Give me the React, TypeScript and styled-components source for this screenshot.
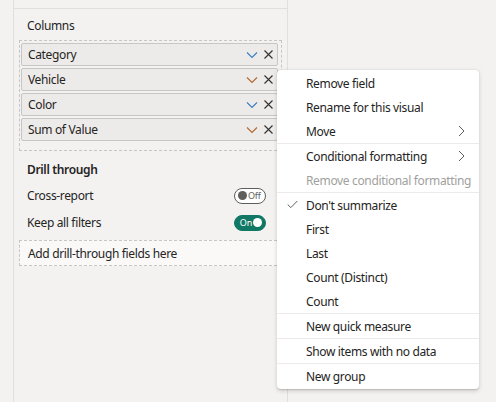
import React from "react";
import styled, { createGlobalStyle } from "styled-components";

const Global = createGlobalStyle`
  html, body { margin: 0; padding: 0; background: #f3f2f1; }
  body { font-family: "Segoe UI", "Noto Sans", "Open Sans", sans-serif; color: #252423; letter-spacing: -0.35px; }
  * { box-sizing: border-box; }
`;

const Page = styled.div`
  position: relative;
  display: flex;
  width: 496px;
  height: 402px;
  overflow: hidden;
  background: #f3f2f1;
`;

const Gutter = styled.div`
  width: 13px;
  flex: none;
`;

const Panel = styled.div`
  width: 275px;
  flex: none;
  display: flex;
  flex-direction: column;
  border-left: 1px solid #e1dfdd;
  border-right: 1px solid #e1dfdd;
`;

const TopStrip = styled.div`
  height: 9px;
  border-bottom: 1px solid #e1dfdd;
  flex: none;
`;

const SectionTitle = styled.div<{ $bold?: boolean }>`
  height: 31px;
  display: flex;
  align-items: center;
  padding-left: 13px;
  padding-top: ${(p) => (p.$bold ? "5px" : "1px")};
  font-size: 12px;
  font-weight: ${(p) => (p.$bold ? 600 : 400)};
  color: #252423;
`;

const DropZone = styled.div`
  margin: 0 5px;
  border: 1px dashed #c8c6c4;
  padding: 2px 3px 9px 1px;
  display: flex;
  flex-direction: column;
  gap: 2px;
`;

const Pill = styled.div`
  height: 23px;
  display: flex;
  align-items: center;
  padding: 0 4px 0 6px;
  background: #edebe9;
  border: 1px solid #c8c6c4;
  border-radius: 2px;
  font-size: 12px;
  color: #252423;
`;

const PillLabel = styled.span`
  flex: 1;
`;

const PillIcons = styled.span`
  display: flex;
  align-items: center;
  gap: 6px;
`;

const ToggleRow = styled.div`
  height: 27px;
  display: flex;
  align-items: center;
  justify-content: space-between;
  padding: 0 21px 0 13px;
  font-size: 12px;
`;

const Toggle = styled.div<{ $on?: boolean }>`
  width: 32px;
  height: 16px;
  border-radius: 8px;
  display: flex;
  align-items: center;
  flex-direction: ${(p) => (p.$on ? "row-reverse" : "row")};
  justify-content: flex-start;
  gap: 1px;
  padding: 0 3px;
  background: ${(p) => (p.$on ? "#117865" : "#ffffff")};
  border: 1px solid ${(p) => (p.$on ? "#117865" : "#605e5c")};
  font-size: 9px;
  letter-spacing: -0.2px;
  color: ${(p) => (p.$on ? "#ffffff" : "#605e5c")};
  line-height: 1;
`;

const Knob = styled.span<{ $on?: boolean }>`
  width: 9px;
  height: 9px;
  border-radius: 50%;
  background: ${(p) => (p.$on ? "#ffffff" : "#605e5c")};
  flex: none;
`;

const AddZone = styled.div`
  margin: 4px 5px 0 5px;
  height: 26px;
  border: 1px dashed #c8c6c4;
  background: #faf9f8;
  display: flex;
  align-items: center;
  padding-left: 8px;
  font-size: 12px;
  color: #252423;
`;

const Menu = styled.div`
  position: absolute;
  left: 277px;
  top: 70px;
  width: 202px;
  background: #ffffff;
  border-radius: 4px;
  box-shadow: 0 1.6px 4px rgba(0, 0, 0, 0.16), 0 0.3px 1px rgba(0, 0, 0, 0.12);
  padding: 1px 0 1px 0;
  display: flex;
  flex-direction: column;
`;

const Item = styled.div<{ $disabled?: boolean }>`
  height: 24px;
  display: flex;
  align-items: center;
  position: relative;
  padding-left: 29px;
  padding-right: 14px;
  font-size: 12px;
  color: ${(p) => (p.$disabled ? "#a19f9d" : "#252423")};
`;

const ItemLabel = styled.span`
  flex: 1;
  white-space: nowrap;
`;

const Check = styled.span`
  position: absolute;
  left: 10px;
  top: 7px;
  display: flex;
`;

const Sep = styled.div`
  height: 1px;
  background: #edebe9;
`;

const Chevron = ({ color }: { color: string }) => (
  <svg width="12" height="8" viewBox="0 0 12 8">
    <path d="M1 1.5 L6 6.5 L11 1.5" fill="none" stroke={color} strokeWidth="1.2" />
  </svg>
);

const Cross = () => (
  <svg width="9" height="9" viewBox="0 0 9 9">
    <path d="M0.5 0.5 L8.5 8.5 M8.5 0.5 L0.5 8.5" fill="none" stroke="#323130" strokeWidth="1.1" />
  </svg>
);

const RightChevron = () => (
  <svg width="7" height="12" viewBox="0 0 7 12">
    <path d="M1 1 L6 6 L1 11" fill="none" stroke="#605e5c" strokeWidth="1" />
  </svg>
);

const CheckMark = () => (
  <svg width="11" height="9" viewBox="0 0 11 9">
    <path d="M0.7 4.5 L3.8 7.6 L10.3 1" fill="none" stroke="#605e5c" strokeWidth="1" />
  </svg>
);

const fields = [
  { name: "Category", color: "#3f7fc4" },
  { name: "Vehicle", color: "#b36a35" },
  { name: "Color", color: "#3f7fc4" },
  { name: "Sum of Value", color: "#b36a35" },
];

type MenuEntry = { label?: string; sub?: boolean; disabled?: boolean; checked?: boolean; sep?: boolean };

const menu: MenuEntry[] = [
  { label: "Remove field" },
  { label: "Rename for this visual" },
  { label: "Move", sub: true },
  { sep: true },
  { label: "Conditional formatting", sub: true },
  { label: "Remove conditional formatting", disabled: true },
  { sep: true },
  { label: "Don't summarize", checked: true },
  { label: "First" },
  { label: "Last" },
  { label: "Count (Distinct)" },
  { label: "Count" },
  { sep: true },
  { label: "New quick measure" },
  { sep: true },
  { label: "Show items with no data" },
  { sep: true },
  { label: "New group" },
];

export default function App() {
  return (
    <>
      <Global />
      <Page>
        <Gutter />
        <Panel>
          <TopStrip />
          <SectionTitle>Columns</SectionTitle>
          <DropZone>
            {fields.map((f) => (
              <Pill key={f.name}>
                <PillLabel>{f.name}</PillLabel>
                <PillIcons>
                  <Chevron color={f.color} />
                  <Cross />
                </PillIcons>
              </Pill>
            ))}
          </DropZone>
          <SectionTitle $bold>Drill through</SectionTitle>
          <ToggleRow>
            <span>Cross-report</span>
            <Toggle>
              <Knob />
              <span>Off</span>
            </Toggle>
          </ToggleRow>
          <ToggleRow>
            <span>Keep all filters</span>
            <Toggle $on>
              <Knob $on />
              <span>On</span>
            </Toggle>
          </ToggleRow>
          <AddZone>Add drill-through fields here</AddZone>
        </Panel>
        <Menu>
          {menu.map((m, i) =>
            m.sep ? (
              <Sep key={i} />
            ) : (
              <Item key={i} $disabled={m.disabled}>
                {m.checked && (
                  <Check>
                    <CheckMark />
                  </Check>
                )}
                <ItemLabel>{m.label}</ItemLabel>
                {m.sub && <RightChevron />}
              </Item>
            )
          )}
        </Menu>
      </Page>
    </>
  );
}
